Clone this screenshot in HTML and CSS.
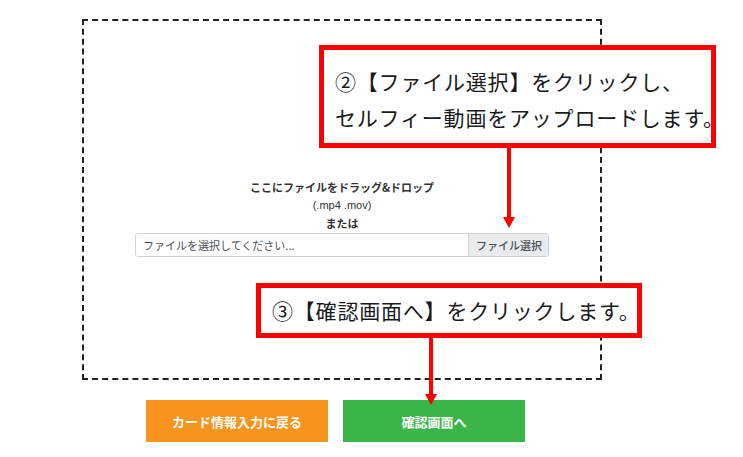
FILE: index.html
```html
<!DOCTYPE html>
<html lang="ja">
<head>
    <meta charset="UTF-8">
    <title>セルフィー動画アップロード</title>
    <link rel="stylesheet" href="styles.css">
</head>
<body>
    <div class="page">
        <div class="dropzone">
            <p class="drop-title">ここにファイルをドラッグ&amp;ドロップ</p>
            <p class="drop-ext">(.mp4 .mov)</p>
            <p class="drop-or">または</p>
            <div class="file-input">
                <span class="file-name">ファイルを選択してください...</span>
                <span class="file-btn">ファイル選択</span>
            </div>
        </div>

        <div class="actions">
            <button class="btn btn-back" type="button">カード情報入力に戻る</button>
            <button class="btn btn-next" type="button">確認画面へ</button>
        </div>

        <!-- annotations -->
        <div class="callout callout-select">
            <p>②【ファイル選択】をクリックし、</p>
            <p>セルフィー動画をアップロードします。</p>
        </div>
        <div class="arrow arrow-select"></div>

        <div class="callout callout-next">
            <p>③【確認画面へ】をクリックします。</p>
        </div>
        <div class="arrow arrow-next"></div>
    </div>
</body>
</html>
```

FILE: styles.css
```css
body {
    margin: 0;
    background: #ffffff;
    font-family: "Noto Sans CJK JP", "Noto Sans", sans-serif;
    color: #333333;
}

p {
    margin: 0;
}

.page {
    position: relative;
    width: 743px;
    height: 457px;
    padding-top: 19px;
    box-sizing: border-box;
}

/* Upload area */
.dropzone {
    width: 520px;
    height: 361px;
    margin-left: 82px;
    border: 2px dashed #222222;
    box-sizing: border-box;
    padding: 157px 51px 0;
    display: flex;
    flex-direction: column;
    align-items: center;
}

.drop-title,
.drop-ext,
.drop-or {
    font-size: 11px;
    line-height: 18px;
    text-align: center;
}

.drop-title,
.drop-or {
    font-weight: 700;
}

.drop-ext {
    font-family: "Liberation Sans", sans-serif;
}

.file-input {
    display: flex;
    width: 100%;
    height: 24px;
    margin-top: 1px;
    border: 1px solid #ced4da;
    border-radius: 3px;
    box-sizing: border-box;
    font-size: 11px;
    color: #495057;
    overflow: hidden;
}

.file-name {
    flex: 1;
    display: flex;
    align-items: center;
    padding-left: 7px;
    background: #ffffff;
}

.file-btn {
    display: flex;
    align-items: center;
    padding: 0 6px 0 7px;
    white-space: nowrap;
    background: #e9ecef;
    border-left: 1px solid #ced4da;
    font-weight: 500;
}

/* Buttons */
.actions {
    display: flex;
    gap: 15px;
    margin: 20px 0 0 146px;
}

.btn {
    width: 182px;
    height: 42px;
    border: none;
    border-radius: 0;
    color: #ffffff;
    font-family: inherit;
    font-size: 13px;
    font-weight: 700;
    cursor: pointer;
}

.btn-back {
    background: #f7941d;
}

.btn-next {
    background: #39b54a;
}

/* Annotations */
.callout {
    position: absolute;
    background: #ffffff;
    border: 5px solid #ff0000;
    box-sizing: border-box;
    color: #1a1a1a;
    font-size: 21px;
    letter-spacing: 0.8px;
    white-space: nowrap;
}

.callout-select {
    left: 319px;
    top: 45px;
    width: 397px;
    height: 103px;
    padding: 13px 0 0 11px;
    line-height: 36px;
}

.callout-next {
    left: 256px;
    top: 283px;
    width: 386px;
    height: 55px;
    padding-left: 11px;
    line-height: 44px;
}

.arrow {
    position: absolute;
    width: 4px;
    background: #ff0000;
}

.arrow::after {
    content: "";
    position: absolute;
    left: -4px;
    bottom: -11px;
    border-left: 6px solid transparent;
    border-right: 6px solid transparent;
    border-top: 11px solid #ff0000;
}

.arrow-select {
    left: 507px;
    top: 148px;
    height: 69px;
}

.arrow-next {
    left: 429px;
    top: 338px;
    height: 56px;
}
```
